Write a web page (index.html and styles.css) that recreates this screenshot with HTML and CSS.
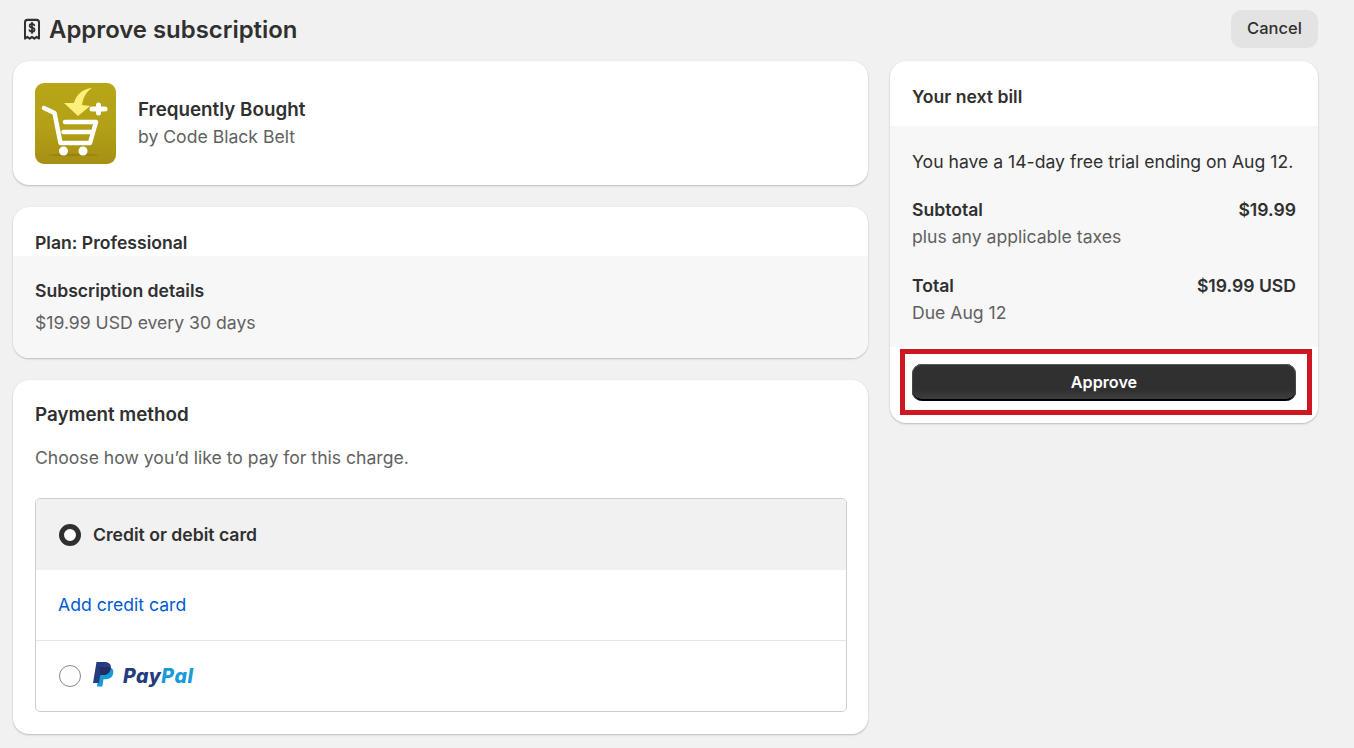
FILE: index.html
```html
<!DOCTYPE html>
<html lang="en">
<head>
<meta charset="utf-8">
<title>Approve subscription</title>
<link rel="stylesheet" href="styles.css">
</head>
<body>
<div class="page">
  <header class="topbar">
    <div class="title-wrap">
      <svg class="receipt" viewBox="0 0 20 23" width="18" height="23" preserveAspectRatio="none" fill="none" stroke="#303030" stroke-width="2.2" stroke-linejoin="round" stroke-linecap="round">
        <path d="M2.2 20.500V4.500a2.600 2.600 0 0 1 2.600-2.600h10.400a2.600 2.600 0 0 1 2.600 2.600v16l-2.600-1.700-2.600 1.900-2.600-1.900-2.600 1.900-2.600-1.900z"/>
        <path stroke-width="1.900" d="M12.600 7.200c-.5-.9-1.400-1.300-2.600-1.300-1.500 0-2.600.7-2.600 1.900 0 2.700 5.400 1.200 5.400 3.900 0 1.200-1.200 1.900-2.800 1.900-1.300 0-2.300-.5-2.800-1.400M10 4.600v10.400"/>
      </svg>
      <h1 class="title">Approve subscription</h1>
    </div>
    <button class="cancel">Cancel</button>
  </header>
  <div class="columns">
    <main class="col-left">
      <section class="card app-card">
        <svg class="logo" viewBox="0 0 81 81" width="81" height="81">
          <defs>
            <linearGradient id="gold" x1="0" y1="0" x2="0" y2="1">
              <stop offset="0" stop-color="#b8a618"/>
              <stop offset="0.55" stop-color="#b3a017"/>
              <stop offset="1" stop-color="#a68f14"/>
            </linearGradient>
          </defs>
          <rect width="81" height="81" rx="9" fill="url(#gold)"/>
          <ellipse cx="38" cy="72" rx="25" ry="1.200" fill="#97830f"/>
          <path d="M57 5C47 6 41 12 39 20L29 20 43 33 55 23 47 22C48 15 51 9 57 5z" fill="#fdf07a"/>
          <path d="M63.500 22v8M57 26h13" stroke="#fff" stroke-width="5" stroke-linecap="round" fill="none"/>
          <path d="M9 25l10.500 5 6 30h29.500l6-21H30M28.500 49h28.500" fill="none" stroke="#fff" stroke-width="4.500" stroke-linecap="round" stroke-linejoin="round"/>
          <circle cx="28.500" cy="68" r="4.500" fill="#fff"/>
          <circle cx="48" cy="68" r="4.500" fill="#fff"/>
        </svg>
        <div class="app-info">
          <div class="app-name">Frequently Bought</div>
          <div class="muted">by Code Black Belt</div>
        </div>
      </section>

      <section class="card plan-card">
        <div class="plan-head strong">Plan: Professional</div>
        <div class="plan-body">
          <div class="strong">Subscription details</div>
          <div class="muted plan-price">$19.99 USD every 30 days</div>
        </div>
      </section>

      <section class="card pay-card">
        <h2 class="pay-title">Payment method</h2>
        <p class="muted pay-sub">Choose how you’d like to pay for this charge.</p>
        <div class="pay-box">
          <div class="pay-row selected">
            <span class="radio on"></span>
            <span class="strong">Credit or debit card</span>
          </div>
          <div class="pay-row add">
            <a class="link" href="#">Add credit card</a>
          </div>
          <div class="pay-row paypal">
            <span class="radio"></span>
            <svg class="pp-mark" viewBox="0 0 22 25" width="22" height="25">
              <path d="M6.500 5H14c4 0 7 1.800 6.300 6-.7 4.300-3.600 6.200-7.600 6.200H10.500L9.300 24.500H4z" fill="#179bd7"/>
              <path d="M3.500 0h8c4.500 0 7 2.300 6.300 6.400-.8 4.500-3.700 6.600-8 6.600H7.300L6 21H0z" fill="#253b80"/>
              <path d="M6.500 5H14c1.500 0 2.800.3 3.800 1-.8 4.500-3.700 7-8 7H7.300z" fill="#222d65"/>
            </svg>
            <span class="pp-word"><span class="pp-pay">Pay</span><span class="pp-pal">Pal</span></span>
          </div>
        </div>
      </section>
    </main>

    <aside class="col-right">
      <section class="card bill-card">
        <div class="bill-head strong">Your next bill</div>
        <div class="bill-body">
          <div class="trial">You have a 14-day free trial ending on Aug 12.</div>
          <div class="bill-line subtotal"><span class="strong">Subtotal</span><span class="strong">$19.99</span></div>
          <div class="muted bill-note">plus any applicable taxes</div>
          <div class="bill-line total"><span class="strong">Total</span><span class="strong">$19.99 USD</span></div>
          <div class="muted bill-note">Due Aug 12</div>
        </div>
        <div class="bill-foot">
          <button class="approve">Approve</button>
        </div>
        <div class="highlight"></div>
      </section>
    </aside>
  </div>
</div>
</body>
</html>
```

FILE: styles.css
```css
* { box-sizing: border-box; }
html, body { margin: 0; padding: 0; }
body {
  background: #f1f1f1;
  color: #303030;
  font-family: Inter, "Liberation Sans", sans-serif;
  font-size: 17.600px;
  line-height: 24px;
  overflow: hidden;
  height: 748px;
}
.page { padding: 10px 36px 0 13px; }
.topbar {
  display: flex;
  justify-content: space-between;
  align-items: center;
  height: 38px;
  margin-bottom: 13px;
}
.title-wrap { display: flex; align-items: center; gap: 8px; padding-left: 11px; }
.receipt { display: block; margin-left: -1px; }
.title { margin: 2px 0 0; font-size: 23.900px; line-height: 38px; font-weight: 600; color: #303030; }
.cancel {
  width: 87px;
  height: 38px;
  border: 0;
  border-radius: 11px;
  background: #e3e3e3;
  color: #303030;
  font: 500 16.500px/22px Inter, sans-serif;
  padding: 0 0 2px;
}
.columns { display: grid; grid-template-columns: 855px 428px; column-gap: 22px; align-items: start; }
.col-left { display: flex; flex-direction: column; gap: 22px; }
.card {
  position: relative;
  background: #fff;
  border-radius: 16px;
  overflow: hidden;
  box-shadow: 0 1px 2px rgba(0,0,0,.22), 0 0 1px rgba(0,0,0,.08);
}
.strong { font-weight: 600; }
.muted { color: #616161; }
.app-card { display: flex; align-items: center; gap: 22px; padding: 22px; height: 124px; }
.logo { display: block; flex: none; }
.app-name { font-size: 18.800px; font-weight: 600; line-height: 27px; margin-top: -1px; }
.app-info .muted { line-height: 26px; margin-top: 1px; }
.plan-head { height: 49px; padding: 24px 22px 0; }
.plan-body { background: #f7f7f7; height: 102px; padding: 23px 22px 0; }
.plan-price { margin-top: 8px; }
.pay-card { height: 354px; padding: 22px; }
.pay-title { margin: 0; font-size: 18.800px; line-height: 25px; font-weight: 600; }
.pay-sub { margin: 19px 0 0; }
.pay-box { margin: 28px -1px 0 0; border: 1px solid #cdcdcd; border-radius: 5px; overflow: hidden; }
.pay-row { display: flex; align-items: center; gap: 12px; padding: 0 22px; }
.selected { height: 71px; background: #f1f1f1; }
.add { height: 71px; border-bottom: 1px solid #e6e6e6; }
.paypal { height: 70px; }
.radio { width: 22px; height: 22px; margin-left: 1px; border-radius: 50%; border: 1px solid #8a8a8a; background: #fdfdfd; flex: none; }
.radio.on { border: 5.500px solid #303030; background: #fff; }
.link { color: #005bd3; text-decoration: none; }
.pp-mark { display: block; margin: -4px -4px 0 0; }
.pp-word { font: italic 800 19.500px/24px Inter, sans-serif; letter-spacing: .55px; }
.pp-pay { color: #253b80; }
.pp-pal { color: #179bd7; }
.bill-card { height: 362px; }
.bill-head { height: 65px; padding: 24px 22px 0; }
.bill-body { background: #f7f7f7; height: 221px; padding: 24px 22px 0; }
.bill-line { display: flex; justify-content: space-between; }
.subtotal { margin-top: 24px; }
.total { margin-top: 25px; }
.bill-note { margin-top: 3px; }
.bill-foot { padding: 17px 22px 0; }
.approve {
  display: block;
  width: 100%;
  height: 37px;
  border: 0;
  border-radius: 10px;
  color: #fff;
  font: 600 16.200px/22px Inter, sans-serif;
  padding: 0 0 2px;
  background: linear-gradient(#303030 0, #303030 70%, #424242 100%);
  box-shadow: inset 0 1px 0 #5a5a5a, inset 1px 0 0 #484848, inset -1px 0 0 #484848, inset 0 -2px 0 #000;
}
.highlight {
  position: absolute;
  left: 10px;
  top: 288px;
  width: 412px;
  height: 66px;
  border: 5px solid #cf1722;
}
```
